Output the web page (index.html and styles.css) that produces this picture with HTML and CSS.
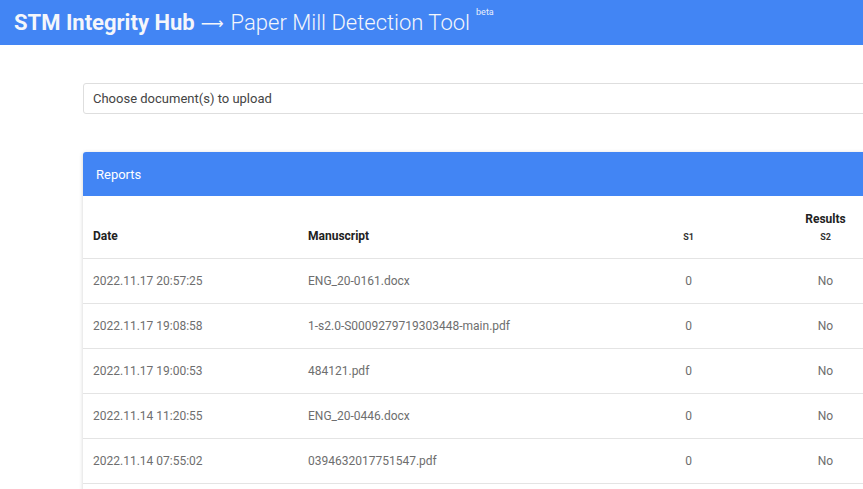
FILE: index.html
```html
<!DOCTYPE html>
<html lang="en">
<head>
    <meta charset="UTF-8">
    <meta name="viewport" content="width=device-width, initial-scale=1.0">
    <title>Paper Mill Detection Tool</title>
    <link rel="stylesheet" href="styles.css">
</head>
<body>

<header class="topbar">
    <span class="brand">STM Integrity Hub</span>
    <span class="arrow">&#10230;</span>
    <span class="tool">Paper Mill Detection Tool</span>
    <sup class="beta">beta</sup>
</header>

<main class="content">
    <label class="upload">
        <span>Choose document(s) to upload</span>
    </label>

    <section class="card">
        <div class="card-head">Reports</div>
        <table class="reports">
            <thead>
                <tr>
                    <th rowspan="2" class="col-date">Date</th>
                    <th rowspan="2" class="col-file">Manuscript</th>
                    <th colspan="3" class="results">Results</th>
                </tr>
                <tr class="sub">
                    <th>S1</th>
                    <th>S2</th>
                    <th>S3</th>
                </tr>
            </thead>
            <tbody>
                <tr><td>2022.11.17 20:57:25</td><td>ENG_20-0161.docx</td><td class="c">0</td><td class="c">No</td><td class="c">No</td></tr>
                <tr><td>2022.11.17 19:08:58</td><td>1-s2.0-S0009279719303448-main.pdf</td><td class="c">0</td><td class="c">No</td><td class="c">No</td></tr>
                <tr><td>2022.11.17 19:00:53</td><td>484121.pdf</td><td class="c">0</td><td class="c">No</td><td class="c">No</td></tr>
                <tr><td>2022.11.14 11:20:55</td><td>ENG_20-0446.docx</td><td class="c">0</td><td class="c">No</td><td class="c">No</td></tr>
                <tr><td>2022.11.14 07:55:02</td><td>0394632017751547.pdf</td><td class="c">0</td><td class="c">No</td><td class="c">No</td></tr>
                <tr><td>2022.11.13 18:41:10</td><td>ENG_20-0398.docx</td><td class="c">0</td><td class="c">No</td><td class="c">No</td></tr>
            </tbody>
        </table>
    </section>
</main>

</body>
</html>
```

FILE: styles.css
```css
html {
    overflow: hidden;
}
body {
    font-family: Roboto, 'Liberation Sans', Arial, sans-serif;
    margin: 0;
    background: #fff;
    color: #333;
}
.topbar {
    display: flex;
    align-items: center;
    height: 45px;
    padding-left: 14px;
    background-color: #4285f4;
    color: #f4f6fb;
    white-space: nowrap;
}
.brand {
    font-size: 22px;
    font-weight: bold;
}
.arrow {
    font-family: 'DejaVu Sans', sans-serif;
    font-size: 16px;
    margin: 2px 0 0 6px;
}
.tool {
    font-size: 22px;
    font-weight: 300;
    margin-left: 7px;
}
.beta {
    align-self: flex-start;
    font-size: 9px;
    margin: 7px 0 0 6px;
    color: #e8eefc;
}
.content {
    width: 948px;
    padding: 38px 0 0 83px;
}
.upload {
    display: flex;
    align-items: center;
    height: 29px;
    padding-left: 9px;
    border: 1px solid #dedede;
    border-radius: 3px;
    font-size: 13px;
    color: #444;
}
.card {
    margin-top: 38px;
    border-radius: 3px;
    box-shadow: 0 1px 4px rgba(0,0,0,0.18);
    background: #fff;
}
.card-head {
    height: 44px;
    line-height: 45px;
    padding-left: 13px;
    background-color: #4285f4;
    color: #fff;
    font-size: 13px;
    border-radius: 3px 3px 0 0;
}
.reports {
    width: 100%;
    border-collapse: collapse;
    table-layout: fixed;
}
.reports th {
    font-size: 12px;
    font-weight: bold;
    color: #222;
    text-align: left;
    padding: 0 10px;
}
.col-date { width: 195px; }
.col-file { width: 302px; }
.reports th.col-date,
.reports th.col-file {
    vertical-align: bottom;
    padding-bottom: 15px;
    border-bottom: 1px solid #e4e4e4;
}
.reports th.results {
    text-align: center;
    padding-top: 14px;
    height: 18px;
}
.reports .sub th {
    text-align: center;
    font-size: 9px;
    color: #333;
    height: 26px;
    vertical-align: top;
    padding-top: 4px;
    border-bottom: 1px solid #e4e4e4;
}
.reports td {
    height: 44px;
    padding: 0 10px;
    font-size: 12px;
    color: #6e6e6e;
    border-bottom: 1px solid #e4e4e4;
}
.reports td.c {
    text-align: center;
}
```
